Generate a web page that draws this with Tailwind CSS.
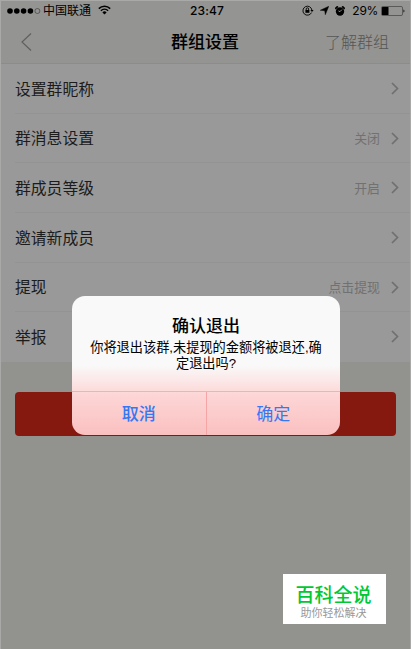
<!DOCTYPE html>
<html lang="zh-CN">
<head>
  <meta charset="UTF-8" />
  <meta name="viewport" content="width=device-width, initial-scale=1.0" />
  <title>群组设置</title>
  <script src="https://cdn.jsdelivr.net/npm/@tailwindcss/browser@4"></script>
</head>
<body class="bg-[#92928f] font-['Liberation_Sans','Noto_Sans_CJK_SC',sans-serif]">
<div class="relative w-[411px] h-[649px] overflow-hidden border-t border-x border-[#a9a9a8]">
  <!-- Header -->
  <header class="h-[63px] bg-[#949492] border-b border-[#8c8c89]">
    <!-- Status bar -->
    <div class="flex items-center h-[19px] pl-[6px] pr-[5px] text-black">
      <div class="flex flex-1 items-center">
        <svg class="w-[34px] h-[8px]" viewBox="0 0 34 8">
          <circle cx="3" cy="4" r="2.8" />
          <circle cx="9.8" cy="4" r="2.8" />
          <circle cx="16.6" cy="4" r="2.8" />
          <circle cx="23.4" cy="4" r="2.8" />
          <circle cx="30.4" cy="4" r="2.5" fill="none" stroke="#333" stroke-width=".6" />
        </svg>
        <span class="ml-[2px] pt-[2px] text-[12px] leading-[19px]">中国联通</span>
        <svg class="ml-[7px] mb-[1px] w-[13px] h-[10px]" viewBox="0 0 13 10" fill="none" stroke="#000" stroke-width="1.5">
          <path d="M.8 3.6a8.2 8.2 0 0 1 11.4 0" />
          <path d="M2.9 5.8a5.2 5.2 0 0 1 7.2 0" />
          <path d="M6.5 9.5 4.4 7.4a3 3 0 0 1 4.2 0z" fill="#000" stroke="none" />
        </svg>
      </div>
      <span class="ml-[2px] font-[Inter] text-[12px] leading-[19px] font-medium tracking-[0.1px]">23:47</span>
      <div class="flex flex-1 items-center justify-end">
        <svg class="w-[12px] h-[11px]" viewBox="0 0 12 11" fill="none" stroke="#000" stroke-width=".9">
          <path d="M9.5 7.6a4.5 4.5 0 1 1 .4-2.4" />
          <path d="M8.4 5h3.2L10 7z" fill="#000" stroke="none" />
          <path d="M3.4 5h4v2.8h-4z" fill="#000" stroke="none" />
          <path d="M4.2 5V4a1.2 1.2 0 0 1 2.4 0v1" />
        </svg>
        <svg class="ml-[6px] w-[9px] h-[9px]" viewBox="0 0 9 9">
          <path d="M8.8.2 5.3 8.8 4.7 4.7.2 4.3z" stroke="#000" stroke-width=".4" />
        </svg>
        <svg class="ml-[6px] w-[10px] h-[10px]" viewBox="0 0 11 11">
          <circle cx="5.5" cy="6" r="4.6" />
          <path d="M.7 3.3A2 2 0 0 1 3.4.8zM10.3 3.3A2 2 0 0 0 7.6.8z" stroke="#000" />
          <path d="M7.6 4 5.5 6.2 3.8 5.4" fill="none" stroke="#949492" stroke-width="1.1" />
        </svg>
        <span class="ml-[7px] font-[Inter] text-[12px] leading-[19px] tracking-[-0.3px]">29%</span>
        <svg class="ml-[3px] w-[24px] h-[10px]" viewBox="0 0 24 10">
          <rect x=".5" y=".5" width="21" height="9" rx="1.3" fill="none" stroke="#333" stroke-width=".6" />
          <rect x="1" y="1" width="6.5" height="8" rx=".5" />
          <path d="M22.5 3.5a1.7 1.7 0 0 1 0 3z" />
        </svg>
      </div>
    </div>
    <!-- Title bar -->
    <div class="flex items-center h-[44px] pl-[20px] pr-[21px]">
      <div class="flex-1">
        <svg class="w-[11px] h-[18px]" viewBox="0 0 11 18" fill="none" stroke="#60605e" stroke-width="1.2">
          <path d="M10 .5 1 9l9 8.5" />
        </svg>
      </div>
      <h1 class="pt-[2px] text-[17px] font-medium text-black">群组设置</h1>
      <div class="flex-1 pt-[2px] text-right text-[16px] text-[#565654] font-light">了解群组</div>
    </div>
  </header>

  <!-- Settings list -->
  <ul id="settings" class="bg-[#999]"></ul>

  <div class="mt-[30px] mx-[14px] h-[44px] rounded-[4px] bg-[#85190f]"></div>

  <!-- Confirm dialog -->
  <div class="absolute left-[71px] top-[295px] w-[268px] h-[139px] flex flex-col rounded-[13px] overflow-hidden bg-linear-to-b from-[#f9f9f9] from-50% via-[#fdd5d5] via-72% to-[#fac0c0]">
    <div class="h-[95px] pt-[20px] text-center text-black">
      <h2 class="text-[17px] leading-[22px] font-medium">确认退出</h2>
      <p class="pt-[2px] text-[13.2px] leading-[16px] whitespace-nowrap">你将退出该群,未提现的金额将被退还,确<br />定退出吗?</p>
    </div>
    <div class="flex flex-1 border-t border-[#f7b0b0] text-[17px] text-[#3478f6]">
      <button class="flex-1 pt-[2px] border-r border-[#f5a5a5] font-medium">取消</button>
      <button class="flex-1 pt-[2px]">确定</button>
    </div>
  </div>

  <!-- Site badge -->
  <div class="absolute left-[282px] top-[573px] w-[103px] h-[50px] pr-[2px] bg-white text-center">
    <div class="pt-[9px] text-[19px] leading-[25px] font-medium text-[#00c832]">百科全说</div>
    <div class="text-[11px] leading-[11px] text-[#999]">助你轻松解决</div>
  </div>
</div>

<script>
  const rows = [
    { label: "设置群昵称", value: "" },
    { label: "群消息设置", value: "关闭" },
    { label: "群成员等级", value: "开启" },
    { label: "邀请新成员", value: "" },
    { label: "提现", value: "点击提现" },
    { label: "举报", value: "" },
  ];

  document.getElementById("settings").innerHTML = rows.map(row => `
    <li class="ml-[14px] pr-[11px] h-[49.7px] flex items-center border-b border-[#939393] last:border-[#999]">
      <span class="flex-1 pt-[2px] text-[15.8px] text-[#1c1c1c]">${row.label}</span>
      <span class="mr-[11px] pt-[2px] text-[12.9px] text-[#717171]">${row.value}</span>
      <svg class="w-[8px] h-[13px]" viewBox="0 0 8 13" fill="none" stroke="#707070" stroke-width="1.7">
        <path d="M1 1 6.5 6.5 1 12" />
      </svg>
    </li>
  `).join("");
</script>
</body>
</html>
